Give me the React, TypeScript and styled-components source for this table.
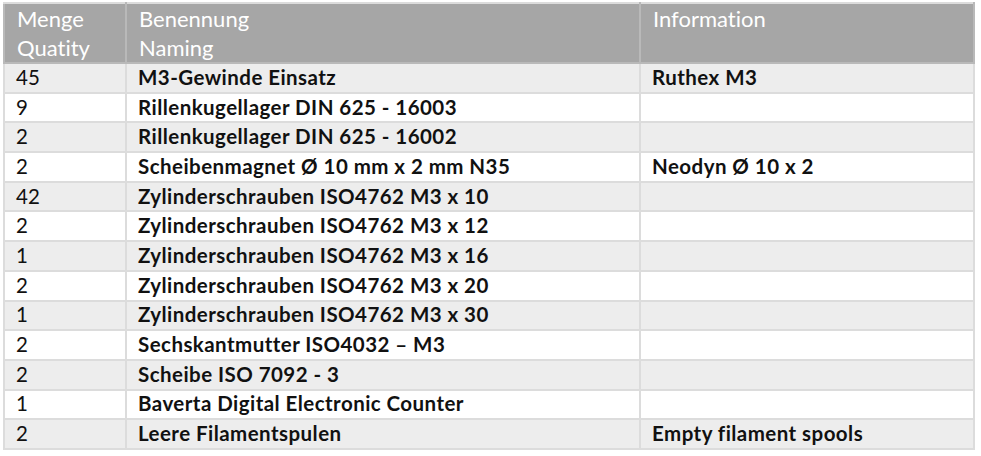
import React from "react";
import styled, { createGlobalStyle } from "styled-components";

const Global = createGlobalStyle`
  html, body { margin: 0; padding: 0; background: #ffffff; }
  body { font-family: Lato, "Open Sans", sans-serif; font-variant-ligatures: none; }
`;

const Page = styled.div`
  padding: 2px 9px 0 3px;
`;

const Table = styled.table`
  border-collapse: collapse;
  width: 970px;
  table-layout: fixed;
  font-family: Lato, "Open Sans", sans-serif;
  font-variant-ligatures: none;
`;

const HeadCell = styled.th`
  background: #a6a6a6;
  color: #ffffff;
  font-weight: 400;
  font-size: 22px;
  line-height: 29px;
  text-align: left;
  vertical-align: top;
  padding: 0 12px 0;
  height: 54px;
  box-sizing: border-box;
  border: 2px solid #b9b9b9;
  border-top-color: #dcdcdc;
`;

const Row = styled.tr<{ $shade: boolean }>`
  background: ${(p) => (p.$shade ? "#ededed" : "#ffffff")};
`;

const Cell = styled.td<{ $bold?: boolean }>`
  height: 29.7px;
  box-sizing: border-box;
  padding: 0 12px 2px 11px;
  font-size: 20.5px;
  letter-spacing: ${(p) => (p.$bold ? "0.45px" : "0.2px")};
  font-weight: ${(p) => (p.$bold ? 700 : 400)};
  color: #111111;
  border: 2px solid #dcdcdc;
  white-space: nowrap;
`;

const rows: [string, string, string][] = [
  ["45", "M3-Gewinde Einsatz", "Ruthex M3"],
  ["9", "Rillenkugellager DIN 625 - 16003", ""],
  ["2", "Rillenkugellager DIN 625 - 16002", ""],
  ["2", "Scheibenmagnet Ø 10 mm x 2 mm N35", "Neodyn Ø 10 x 2"],
  ["42", "Zylinderschrauben ISO4762 M3 x 10", ""],
  ["2", "Zylinderschrauben ISO4762 M3 x 12", ""],
  ["1", "Zylinderschrauben ISO4762 M3 x 16", ""],
  ["2", "Zylinderschrauben ISO4762 M3 x 20", ""],
  ["1", "Zylinderschrauben ISO4762 M3 x 30", ""],
  ["2", "Sechskantmutter ISO4032 – M3", ""],
  ["2", "Scheibe ISO 7092 - 3", ""],
  ["1", "Baverta Digital Electronic Counter", ""],
  ["2", "Leere Filamentspulen", "Empty filament spools"],
];

export default function App() {
  return (
    <Page>
      <Global />
      <Table>
        <colgroup>
          <col style={{ width: 122 }} />
          <col style={{ width: 514 }} />
          <col style={{ width: 334 }} />
        </colgroup>
        <thead>
          <tr>
            <HeadCell>
              Menge
              <br />
              Quatity
            </HeadCell>
            <HeadCell>
              Benennung
              <br />
              Naming
            </HeadCell>
            <HeadCell>Information</HeadCell>
          </tr>
        </thead>
        <tbody>
          {rows.map((r, i) => (
            <Row key={i} $shade={i % 2 === 0}>
              <Cell>{r[0]}</Cell>
              <Cell $bold>{r[1]}</Cell>
              <Cell $bold>{r[2]}</Cell>
            </Row>
          ))}
        </tbody>
      </Table>
    </Page>
  );
}
